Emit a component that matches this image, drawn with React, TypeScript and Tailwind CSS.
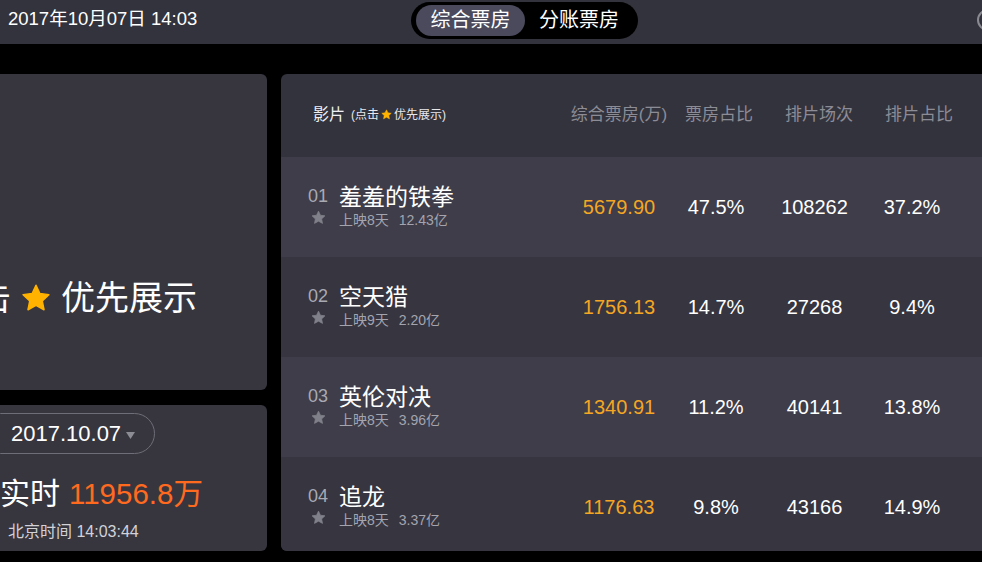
import React from "react";

const FONT = { fontFamily: '"Liberation Sans", "Noto Sans CJK SC", sans-serif' };

function Star({ size, color, className = "" }: { size: number; color: string; className?: string }) {
  return (
    <svg width={size} height={size} viewBox="0 0 24 24" className={className}>
      <path
        d="M12 1.8l3.1 6.6 7.2.9-5.3 5 1.4 7.1L12 17.9l-6.4 3.5 1.4-7.1-5.3-5 7.2-.9z"
        fill={color}
        stroke={color}
        strokeWidth="1.2"
        strokeLinejoin="round"
      />
    </svg>
  );
}

const rows = [
  { no: "01", name: "羞羞的铁拳", days: "上映8天", total: "12.43亿", bo: "5679.90", pct: "47.5%", shows: "108262", spct: "37.2%" },
  { no: "02", name: "空天猎", days: "上映9天", total: "2.20亿", bo: "1756.13", pct: "14.7%", shows: "27268", spct: "9.4%" },
  { no: "03", name: "英伦对决", days: "上映8天", total: "3.96亿", bo: "1340.91", pct: "11.2%", shows: "40141", spct: "13.8%" },
  { no: "04", name: "追龙", days: "上映8天", total: "3.37亿", bo: "1176.63", pct: "9.8%", shows: "43166", spct: "14.9%" },
];

export default function App() {
  return (
    <div className="w-[982px] h-[562px] overflow-hidden bg-black text-white" style={FONT}>
      {/* top bar */}
      <div className="h-[44px] bg-[#33333d] flex items-center overflow-hidden">
        <div className="shrink-0 pl-[8px] text-[18.5px] leading-none whitespace-nowrap pb-[6px] w-[411px]">2017年10月07日 14:03</div>
        <div className="shrink-0 h-[37px] w-[227px] bg-black rounded-full flex items-center px-[5px] mb-[4px]">
          <div className="h-[31px] w-[109px] rounded-full bg-[#4a4a5c] flex items-center justify-center text-[20px] leading-none">综合票房</div>
          <div className="flex-1 flex items-center justify-center text-[20px] leading-none">分账票房</div>
        </div>
        <div className="shrink-0 ml-[339px] w-[22px] h-[22px] rounded-full border-2 border-[#8a8a92] mb-[4px]" />
      </div>

      {/* main */}
      <div className="mt-[30px] flex gap-[14px]">
        <div className="-ml-[20px] w-[287px] shrink-0 flex flex-col gap-[15px]">
          <div className="h-[316px] rounded-[6px] bg-[#37363f] pt-[207px] overflow-visible">
            <div className="flex items-center whitespace-nowrap text-[34px] leading-none -ml-[37px]">
              <span>点击</span>
              <Star size={30} color="#ffb300" className="ml-[10px]" />
              <span className="ml-[10px]">优先展示</span>
            </div>
          </div>
          <div className="h-[146px] rounded-[6px] bg-[#37363f] pt-[8px]">
            <div className="h-[41px] w-[175px] rounded-full border border-[#6e6e78] flex items-center pl-[30px]">
              <span className="text-[22px] leading-none">2017.10.07</span>
              <svg width="9" height="7" viewBox="0 0 9 7" className="ml-[5px] mt-[3px]">
                <path d="M0 0h9L4.5 7z" fill="#8c8c94" />
              </svg>
            </div>
            <div className="mt-[25px] flex items-baseline whitespace-nowrap pl-[20px] leading-none">
              <span className="text-[30px]">实时</span>
              <span className="text-[29.5px] text-[#ff6a1f] ml-[9px]">11956.8万</span>
            </div>
            <div className="mt-[15px] pl-[28px] text-[16px] leading-none text-[#d2d2d8] whitespace-nowrap">北京时间 14:03:44</div>
          </div>
        </div>

        <div className="w-[720px] h-[477px] shrink-0 rounded-[6px] overflow-hidden bg-[#33333d]">
          <div className="h-[83px] flex items-center pb-[2px]">
            <div className="w-[288px] pl-[32px] flex items-center whitespace-nowrap">
              <span className="text-[16px] text-[#f0f0f4]">影片</span>
              <span className="ml-[6px] text-[12px] text-[#e8e8ec] flex items-center">
                (点击
                <Star size={11} color="#ffb300" className="mx-[2px]" />
                优先展示)
              </span>
            </div>
            {["综合票房(万)", "票房占比", "排片场次", "排片占比"].map((h) => (
              <div key={h} className="w-[100px] text-center text-[17px] text-[#8c8c96] whitespace-nowrap">
                {h}
              </div>
            ))}
          </div>
          {rows.map((r, i) => (
            <div key={r.no} className={`h-[100px] flex items-center ${i % 2 === 0 ? "bg-[#3e3d49]" : "bg-[#363540]"}`}>
              <div className="w-[288px] pl-[27px] flex items-start pb-[2px]">
                <div className="flex flex-col items-center w-[20px]">
                  <span className="text-[18px] leading-none text-[#a9a9b2] mt-[3px]">{r.no}</span>
                  <Star size={15} color="#80808a" className="mt-[5px]" />
                </div>
                <div className="ml-[11px] flex flex-col">
                  <span className="text-[23px] leading-[26px] text-white">{r.name}</span>
                  <span className="text-[14px] leading-[18px] text-[#a4a4ae] whitespace-nowrap mt-[1px]">
                    {r.days}
                    <span className="ml-[10px]">{r.total}</span>
                  </span>
                </div>
              </div>
              <div className="w-[100px] text-center text-[20px] text-[#f5a623]">{r.bo}</div>
              <div className="w-[94px] text-center text-[20px]">{r.pct}</div>
              <div className="w-[103px] text-center text-[20px]">{r.shows}</div>
              <div className="w-[92px] text-center text-[20px]">{r.spct}</div>
            </div>
          ))}
        </div>
      </div>
    </div>
  );
}
